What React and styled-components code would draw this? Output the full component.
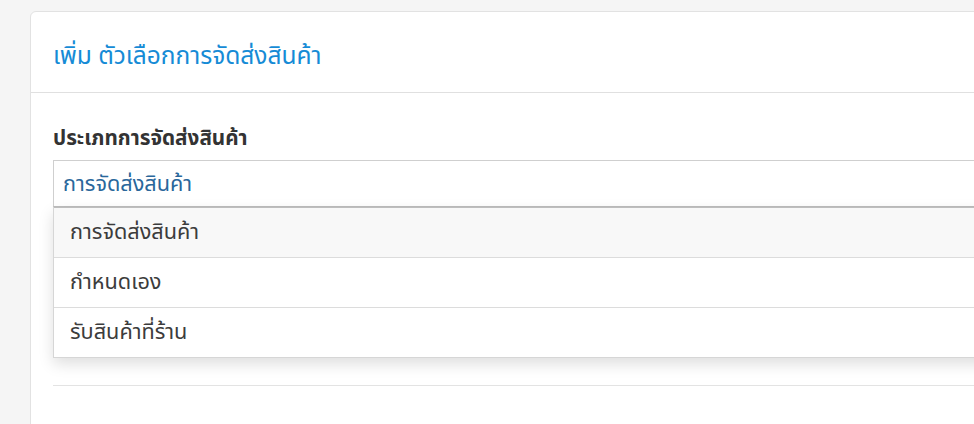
import React, { useState } from 'react';
import styled, { createGlobalStyle } from 'styled-components';

const GlobalStyle = createGlobalStyle`
    html, body {
        margin: 0;
        padding: 0;
        background: #f5f5f5;
        overflow: hidden;
        font-family: "Noto Sans Thai", "Noto Sans", "DejaVu Sans", sans-serif;
    }
`;

const Page = styled.div`
    padding: 11px 0 0 30px;
    height: 413px;
`;

const Card = styled.div`
    width: 1000px;
    height: 420px;
    background: #fff;
    border: 1px solid #e2e2e2;
    border-radius: 6px 0 0 0;
    box-sizing: border-box;
`;

const CardHeader = styled.div`
    height: 81px;
    box-sizing: border-box;
    padding: 0 22px;
    display: flex;
    align-items: center;
    border-bottom: 1px solid #e0e0e0;
`;

const Title = styled.h3`
    margin: 10px 0 0;
    font-size: 24.5px;
    font-weight: 400;
    color: #168bd6;
    line-height: 30px;
`;

const CardBody = styled.div`
    padding: 32px 0 0 22px;
`;

const Label = styled.label`
    display: block;
    font-size: 20.7px;
    font-weight: 700;
    color: #333;
    margin-bottom: 7px;
    line-height: 28px;
`;

const SelectWrap = styled.div`
    position: relative;
`;

const SelectBox = styled.div`
    height: 47px;
    box-sizing: border-box;
    border: 1px solid #cfcfcf;
    border-bottom-color: #bdbdbd;
    padding: 2px 9px 0;
    display: flex;
    align-items: center;
    font-size: 21.7px;
    color: #2a679b;
`;

const Menu = styled.ul`
    position: absolute;
    top: 100%;
    left: 0;
    right: 0;
    margin: 0;
    padding: 0;
    list-style: none;
    background: #fff;
    border: 1px solid #d6d6d6;
    border-top: none;
    box-shadow: 0 6px 14px rgba(0, 0, 0, 0.13);
    z-index: 10;
`;

const MenuItem = styled.li`
    height: 50px;
    box-sizing: border-box;
    padding: 0 16px;
    display: flex;
    align-items: center;
    font-size: 21.7px;
    color: #3c3c3c;
    background: ${(p) => (p.active ? '#f8f8f8' : '#fff')};
    border-top: 1px solid ${(p) => (p.first ? '#bdbdbd' : '#dcdcdc')};
`;

const HiddenGroup = styled.div`
    height: 178px;
    border-bottom: 1px solid #e3e3e3;
`;

const options = ['การจัดส่งสินค้า', 'กำหนดเอง', 'รับสินค้าที่ร้าน'];

export default function App() {
    const [value] = useState(options[0]);

    return (
        <>
            <GlobalStyle />
            <Page>
                <Card>
                    <CardHeader>
                        <Title>เพิ่ม ตัวเลือกการจัดส่งสินค้า</Title>
                    </CardHeader>
                    <CardBody>
                        <Label>ประเภทการจัดส่งสินค้า</Label>
                        <SelectWrap>
                            <SelectBox>{value}</SelectBox>
                            <Menu>
                                {options.map((o, i) => (
                                    <MenuItem key={o} first={i === 0} active={o === value}>
                                        {o}
                                    </MenuItem>
                                ))}
                            </Menu>
                        </SelectWrap>
                        <HiddenGroup />
                    </CardBody>
                </Card>
            </Page>
        </>
    );
}
